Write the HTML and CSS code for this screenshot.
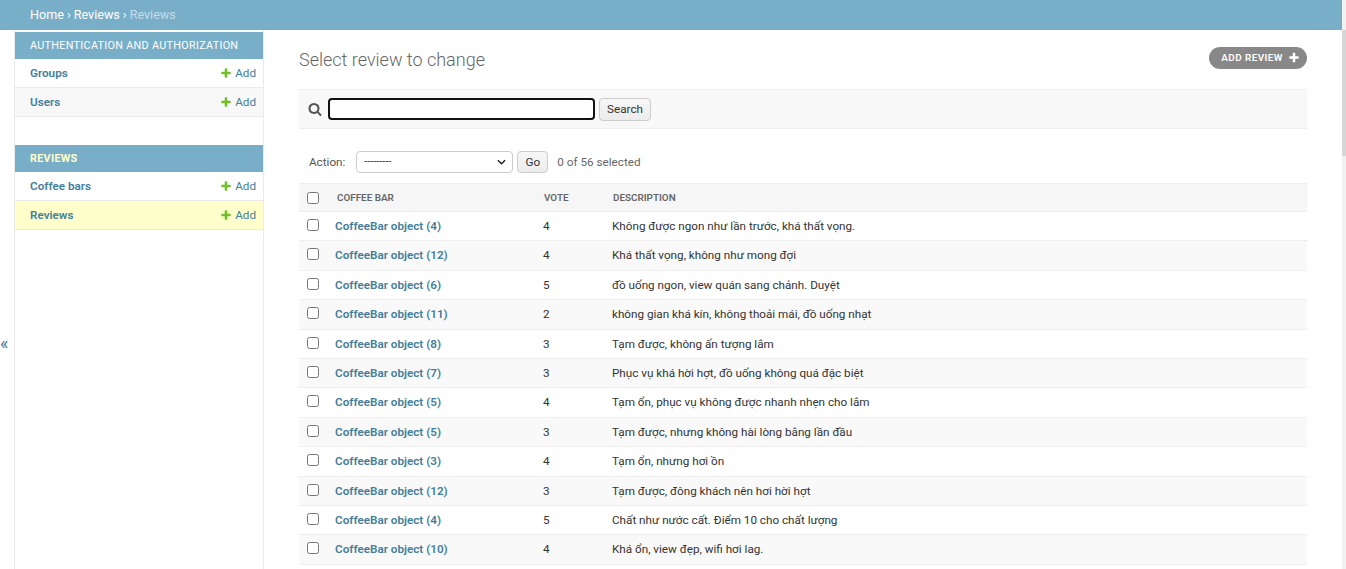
FILE: index.html
```html
<!DOCTYPE html>
<html lang="vi">
<head>
<meta charset="utf-8">
<title>Select review to change</title>
<link rel="stylesheet" href="styles.css">
</head>
<body>
<div class="page">
  <div class="breadcrumbs">
    <a href="#" class="crumb">Home</a><span class="sep">›</span><a href="#" class="crumb">Reviews</a><span class="sep">›</span><span class="crumb-current">Reviews</span>
  </div>
  <div class="main">
    <div class="toggle-nav"><span class="toggle-glyph">«</span></div>
    <nav class="sidebar">
      <div class="module">
        <div class="caption">Authentication and Authorization</div>
        <div class="model-row">
          <a href="#" class="model-link">Groups</a>
          <a href="#" class="addlink"><svg class="plus" viewBox="0 0 1792 1792"><path fill="#70bf2b" d="M1600 796v192q0 40-28 68t-68 28h-416v416q0 40-28 68t-68 28h-192q-40 0-68-28t-28-68v-416h-416q-40 0-68-28t-28-68v-192q0-40 28-68t68-28h416v-416q0-40 28-68t68-28h192q40 0 68 28t28 68v416h416q40 0 68 28t28 68z"/></svg>Add</a>
        </div>
        <div class="model-row alt">
          <a href="#" class="model-link">Users</a>
          <a href="#" class="addlink"><svg class="plus" viewBox="0 0 1792 1792"><path fill="#70bf2b" d="M1600 796v192q0 40-28 68t-68 28h-416v416q0 40-28 68t-68 28h-192q-40 0-68-28t-28-68v-416h-416q-40 0-68-28t-28-68v-192q0-40 28-68t68-28h416v-416q0-40 28-68t68-28h192q40 0 68 28t28 68v416h416q40 0 68 28t28 68z"/></svg>Add</a>
        </div>
      </div>
      <div class="module">
        <div class="caption current-app">Reviews</div>
        <div class="model-row">
          <a href="#" class="model-link">Coffee bars</a>
          <a href="#" class="addlink"><svg class="plus" viewBox="0 0 1792 1792"><path fill="#70bf2b" d="M1600 796v192q0 40-28 68t-68 28h-416v416q0 40-28 68t-68 28h-192q-40 0-68-28t-28-68v-416h-416q-40 0-68-28t-28-68v-192q0-40 28-68t68-28h416v-416q0-40 28-68t68-28h192q40 0 68 28t28 68v416h416q40 0 68 28t28 68z"/></svg>Add</a>
        </div>
        <div class="model-row current-model">
          <a href="#" class="model-link">Reviews</a>
          <a href="#" class="addlink"><svg class="plus" viewBox="0 0 1792 1792"><path fill="#70bf2b" d="M1600 796v192q0 40-28 68t-68 28h-416v416q0 40-28 68t-68 28h-192q-40 0-68-28t-28-68v-416h-416q-40 0-68-28t-28-68v-192q0-40 28-68t68-28h416v-416q0-40 28-68t68-28h192q40 0 68 28t28 68v416h416q40 0 68 28t28 68z"/></svg>Add</a>
        </div>
      </div>
    </nav>
    <section class="content">
      <div class="content-head">
        <h1 class="title">Select review to change</h1>
        <a href="#" class="object-tool">Add review<svg class="tool-plus" viewBox="0 0 1792 1792"><path fill="#ffffff" d="M1600 736v192q0 40-28 68t-68 28h-416v416q0 40-28 68t-68 28h-192q-40 0-68-28t-28-68v-416h-416q-40 0-68-28t-28-68v-192q0-40 28-68t68-28h416v-416q0-40 28-68t68-28h192q40 0 68 28t28 68v416h416q40 0 68 28t28 68z"/></svg></a>
      </div>
      <div class="toolbar">
        <svg class="search-icon" viewBox="0 0 1792 1792"><path fill="#555555" d="M1216 832q0-185-131.5-316.5t-316.5-131.5-316.5 131.5-131.5 316.5 131.5 316.5 316.5 131.5 316.5-131.5 131.5-316.5zm512 832q0 52-38 90t-90 38q-54 0-90-38l-343-342q-179 124-399 124-143 0-273.5-55.5t-225-150-150-225-55.5-273.5 55.5-273.5 150-225 225-150 273.5-55.5 273.5 55.5 225 150 150 225 55.5 273.5q0 220-124 399l343 343q37 37 37 90z"/></svg>
        <input class="search-input" type="text">
        <button class="btn search-btn" type="button">Search</button>
      </div>
      <div class="actions">
        <label class="action-label">Action:</label>
        <div class="select"><span>---------</span><svg class="chev" viewBox="0 0 10 6"><path d="M1 1l4 4 4-4" fill="none" stroke="#222" stroke-width="1.6"/></svg></div>
        <button class="btn go-btn" type="button">Go</button>
        <span class="counter">0 of 56 selected</span>
      </div>
      <table class="results">
        <thead>
          <tr>
            <th class="col-check"><input type="checkbox" class="cb"></th>
            <th class="col-bar">Coffee bar</th>
            <th class="col-vote">Vote</th>
            <th class="col-desc">Description</th>
          </tr>
        </thead>
        <tbody>
          <tr><td class="col-check"><input type="checkbox" class="cb"></td><th class="cell-link"><a href="#">CoffeeBar object (4)</a></th><td>4</td><td>Không được ngon như lần trước, khá thất vọng.</td></tr>
          <tr class="alt"><td class="col-check"><input type="checkbox" class="cb"></td><th class="cell-link"><a href="#">CoffeeBar object (12)</a></th><td>4</td><td>Khá thất vọng, không như mong đợi</td></tr>
          <tr><td class="col-check"><input type="checkbox" class="cb"></td><th class="cell-link"><a href="#">CoffeeBar object (6)</a></th><td>5</td><td>đồ uống ngon, view quán sang chảnh. Duyệt</td></tr>
          <tr class="alt"><td class="col-check"><input type="checkbox" class="cb"></td><th class="cell-link"><a href="#">CoffeeBar object (11)</a></th><td>2</td><td>không gian khá kín, không thoải mái, đồ uống nhạt</td></tr>
          <tr><td class="col-check"><input type="checkbox" class="cb"></td><th class="cell-link"><a href="#">CoffeeBar object (8)</a></th><td>3</td><td>Tạm được, không ấn tượng lắm</td></tr>
          <tr class="alt"><td class="col-check"><input type="checkbox" class="cb"></td><th class="cell-link"><a href="#">CoffeeBar object (7)</a></th><td>3</td><td>Phục vụ khá hời hợt, đồ uống không quá đặc biệt</td></tr>
          <tr><td class="col-check"><input type="checkbox" class="cb"></td><th class="cell-link"><a href="#">CoffeeBar object (5)</a></th><td>4</td><td>Tạm ổn, phục vụ không được nhanh nhẹn cho lắm</td></tr>
          <tr class="alt"><td class="col-check"><input type="checkbox" class="cb"></td><th class="cell-link"><a href="#">CoffeeBar object (5)</a></th><td>3</td><td>Tạm được, nhưng không hài lòng bằng lần đầu</td></tr>
          <tr><td class="col-check"><input type="checkbox" class="cb"></td><th class="cell-link"><a href="#">CoffeeBar object (3)</a></th><td>4</td><td>Tạm ổn, nhưng hơi ồn</td></tr>
          <tr class="alt"><td class="col-check"><input type="checkbox" class="cb"></td><th class="cell-link"><a href="#">CoffeeBar object (12)</a></th><td>3</td><td>Tạm được, đông khách nên hơi hời hợt</td></tr>
          <tr><td class="col-check"><input type="checkbox" class="cb"></td><th class="cell-link"><a href="#">CoffeeBar object (4)</a></th><td>5</td><td>Chất như nước cất. Điểm 10 cho chất lượng</td></tr>
          <tr class="alt"><td class="col-check"><input type="checkbox" class="cb"></td><th class="cell-link"><a href="#">CoffeeBar object (10)</a></th><td>4</td><td>Khá ổn, view đẹp, wifi hơi lag.</td></tr>
        </tbody>
      </table>
    </section>
  </div>
</div>
<div class="scrollbar"><div class="thumb"></div></div>
</body>
</html>
```
FILE: styles.css
```css
html, body {
  margin: 0;
  padding: 0;
  height: 100%;
  overflow: hidden;
}
body {
  display: flex;
  font-family: Roboto, "Liberation Sans", Arial, sans-serif;
  color: #333;
  background: #fff;
  font-size: 11.7px;
}
a { text-decoration: none; color: #447e9b; }
.page {
  flex: 1;
  min-width: 0;
  display: flex;
  flex-direction: column;
}
.scrollbar {
  width: 4px;
  background: #f1f1f1;
  flex: 0 0 4px;
}
.thumb {
  margin-top: 30px;
  height: 126px;
  background: #d6d6d6;
}
.breadcrumbs {
  height: 29px;
  flex: 0 0 29px;
  padding: 0 30px 1px;
  background: #79aec8;
  display: flex;
  align-items: center;
  font-size: 12.6px;
  color: #fff;
}
.breadcrumbs .crumb { color: #fff; }
.breadcrumbs .sep { margin: 0 3px; color: #fff; }
.breadcrumbs .crumb-current { color: #c4dce8; }
.main {
  flex: 1;
  display: flex;
  align-items: stretch;
}
.toggle-nav {
  width: 14px;
  flex: 0 0 14px;
  border-right: 1px solid #eaeaea;
  background: #fff;
  color: #447e9b;
  font-size: 18px;
  line-height: 20px;
  padding-top: 303px;
  box-sizing: content-box;
}
.toggle-glyph { display: block; }
.sidebar {
  width: 248px;
  flex: 0 0 248px;
  border-right: 1px solid #eaeaea;
  padding-top: 2px;
}
.module { margin-bottom: 28px; }
.caption {
  height: 27px;
  line-height: 27px;
  padding: 0 15px;
  background: #79aec8;
  color: #fff;
  font-size: 10.8px;
  text-transform: uppercase;
  letter-spacing: 0.3px;
}
.caption.current-app { color: #ffc; font-weight: 700; }
.model-row {
  height: 28px;
  border-bottom: 1px solid #eaeaea;
  display: flex;
  align-items: center;
  justify-content: space-between;
  padding: 0 7px 0 15px;
}
.model-row.alt { background: #f8f8f8; }
.model-row.current-model { background: #ffc; }
.model-link { font-weight: 600; font-size: 11.7px; }
.addlink {
  display: flex;
  align-items: center;
  font-size: 11.7px;
}
.plus { width: 12px; height: 12px; margin-right: 3px; }
.content {
  flex: 1;
  min-width: 0;
  padding: 18px 35px 0;
}
.content-head {
  display: flex;
  justify-content: space-between;
  align-items: flex-start;
  margin-bottom: 17px;
}
.title {
  margin: 0;
  font-size: 18px;
  line-height: 24px;
  font-weight: 300;
  color: #666;
}
.object-tool {
  margin-top: -1px;
  height: 22px;
  line-height: 22px;
  border-radius: 11px;
  background: #888;
  color: #fff;
  font-size: 9.9px;
  font-weight: 600;
  text-transform: uppercase;
  letter-spacing: 0.45px;
  padding: 0 7px 0 12px;
  display: flex;
  align-items: center;
}
.tool-plus { width: 12px; height: 12px; margin-left: 5px; }
.toolbar {
  height: 38px;
  background: #f8f8f8;
  border-top: 1px solid #eee;
  border-bottom: 1px solid #eee;
  display: flex;
  align-items: center;
  padding-left: 9px;
}
.search-icon { width: 14px; height: 14px; margin-right: 6px; }
.search-input {
  width: 267px;
  height: 22px;
  box-sizing: border-box;
  border: 2px solid #111;
  border-radius: 4px;
  margin: 0;
  outline: none;
  background: #fff;
}
.btn {
  font-family: Roboto, "Liberation Sans", sans-serif;
  font-size: 11.7px;
  color: #333;
  background: linear-gradient(#f7f7f7, #ececec);
  border: 1px solid #ccc;
  border-radius: 4px;
  padding: 0;
  box-sizing: border-box;
}
.search-btn { width: 52px; height: 23px; margin-left: 4px; }
.actions {
  margin-top: 21px;
  height: 23px;
  display: flex;
  align-items: center;
  padding-left: 10px;
  color: #555;
}
.action-label { margin-right: 11px; }
.select {
  width: 157px;
  height: 22px;
  box-sizing: border-box;
  border: 1px solid #ccc;
  border-radius: 4px;
  display: flex;
  align-items: center;
  justify-content: space-between;
  padding: 0 6px 0 7px;
  color: #333;
  font-size: 10.8px;
  background: #fff;
}
.chev { width: 9px; height: 6px; }
.go-btn { width: 31px; height: 22px; margin-left: 4px; }
.counter { margin-left: 9px; color: #666; }
.results {
  margin-top: 10px;
  width: 100%;
  border-collapse: collapse;
  table-layout: fixed;
}
.results thead th {
  height: 27px;
  padding: 0 8px;
  background: #f6f6f6;
  border-top: 1px solid #eee;
  border-bottom: 1px solid #eee;
  color: #666;
  font-size: 9.9px;
  font-weight: 600;
  text-transform: uppercase;
  text-align: left;
  vertical-align: middle;
}
.results thead th.col-bar { padding-left: 10px; }
.results thead th.col-vote { padding-left: 9px; }
.results thead th.col-desc { padding-left: 9px; }
.results .col-check { width: 28px; padding: 0 !important; text-align: center; }
.results .col-bar { width: 190px; }
.results .col-vote { width: 52px; }
.results tbody td, .results tbody th {
  padding: 6px 8px;
  line-height: 16.4px;
  border-bottom: 1px solid #eee;
  text-align: left;
  vertical-align: middle;
  font-size: 11.7px;
  color: #333;
  font-weight: 400;
}
.results tbody td.col-check {
  vertical-align: top;
  padding-top: 7px !important;
  line-height: 12px;
}
.results tbody th.cell-link a { font-weight: 600; color: #447e9b; }
.results tbody tr.alt { background: #f9f9f9; }
.cb {
  width: 12px;
  height: 12px;
  margin: 0;
  vertical-align: top;
}
.results thead .cb { vertical-align: middle; }
```
